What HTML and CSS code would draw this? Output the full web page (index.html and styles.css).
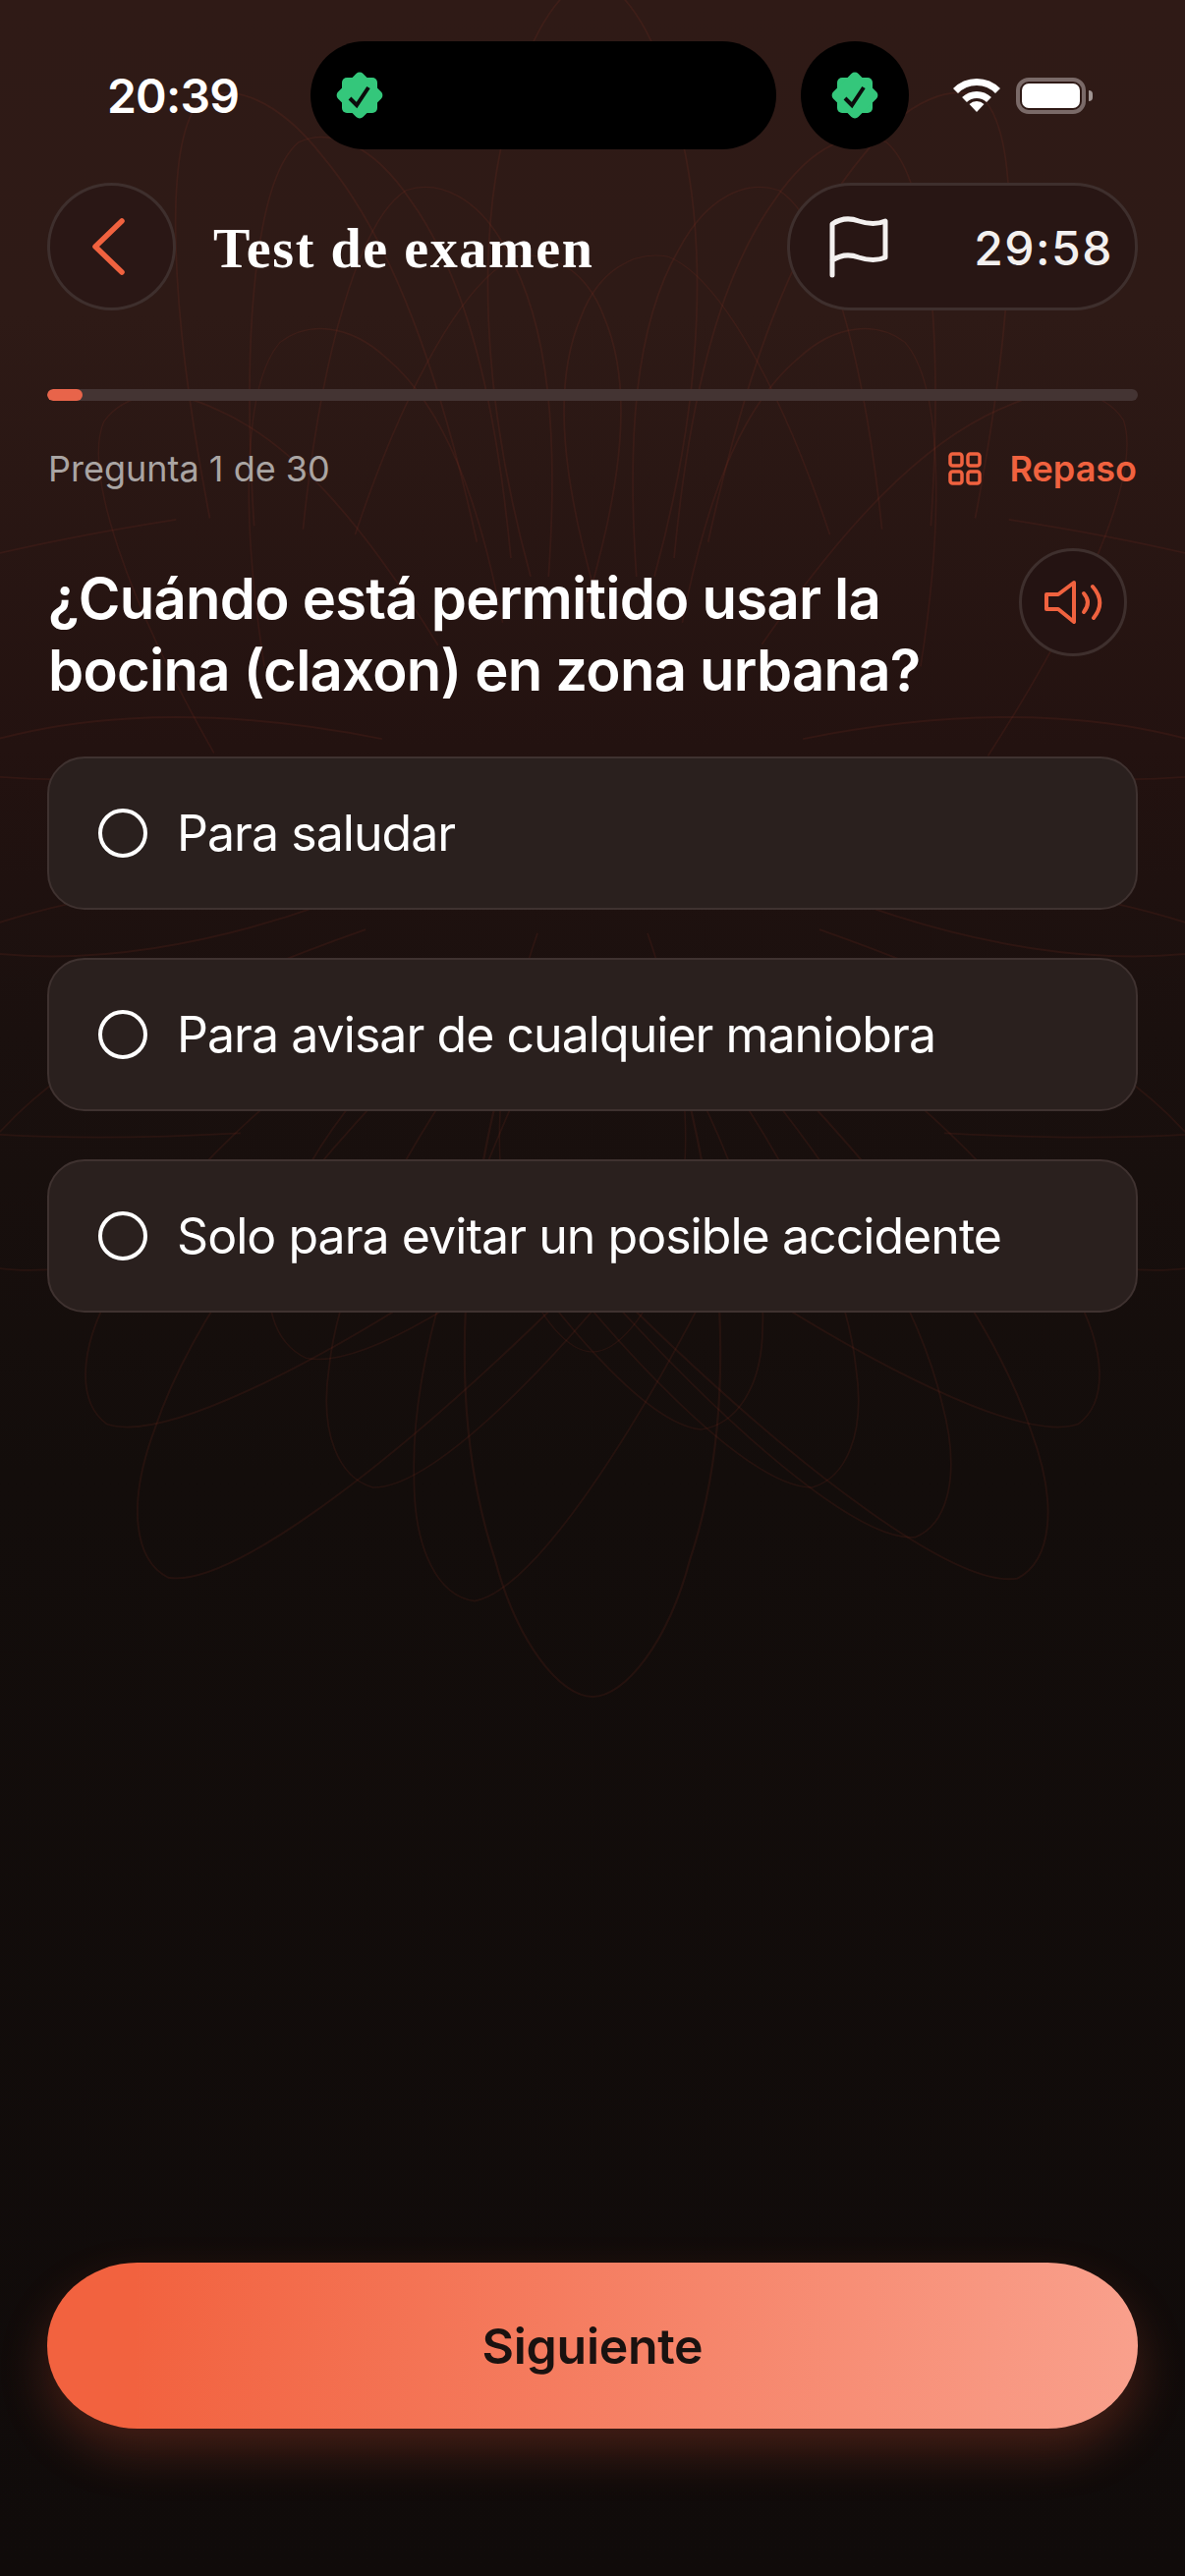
FILE: index.html
```html
<!DOCTYPE html>
<html lang="es">

<head>
    <meta charset="UTF-8">
    <meta name="viewport" content="width=device-width, initial-scale=1.0">
    <title>Test de examen</title>
    <link rel="stylesheet" href="styles.css">
</head>

<body>
    <div class="screen">
        <svg class="flower" viewBox="0 0 1206 2622" aria-hidden="true">
            <defs>
                <path id="petal" d="M-70 260 C-125 480 -135 690 -90 850 C-70 940 -30 1000 0 1000 C30 1000 70 940 90 850 C135 690 125 480 70 260"/>
                <path id="petal-l" d="M-30 340 C-90 540 -125 720 -105 860 C-95 950 -60 1000 -20 1000 C40 980 130 800 215 540"/>
                <path id="petal-r" d="M30 340 C90 540 125 720 105 860 C95 950 60 1000 20 1000 C-40 980 -130 800 -215 540"/>
            </defs>
            <g transform="translate(603 800)">
                <!-- lower half -->
                <use href="#petal" transform="scale(1.1 .927)"/>
                <use href="#petal" transform="scale(.8 .576)"/>
                <use href="#petal-l" transform="rotate(7) scale(.9 .838)"/>
                <use href="#petal-r" transform="rotate(-8) scale(.9 .664)"/>
                <use href="#petal-l" transform="rotate(16) scale(.9 .748)"/>
                <use href="#petal-r" transform="rotate(-16) scale(.9 .748)"/>
                <use href="#petal-l" transform="rotate(25) scale(.9 .651)"/>
                <use href="#petal-r" transform="rotate(-22) scale(.9 .832)"/>
                <use href="#petal-l" transform="rotate(27) scale(.95 .914)"/>
                <use href="#petal-r" transform="rotate(-27) scale(.95 .915)"/>
                <use href="#petal-l" transform="rotate(36) scale(.9 .816)"/>
                <use href="#petal-r" transform="rotate(-36) scale(.9 .816)"/>
                <!-- sides -->
                <use href="#petal-l" transform="rotate(52) scale(.9 .8)"/>
                <use href="#petal-r" transform="rotate(-52) scale(.9 .8)"/>
                <use href="#petal-l" transform="rotate(68) scale(.9 .86)"/>
                <use href="#petal-r" transform="rotate(-68) scale(.9 .86)"/>
                <use href="#petal" transform="rotate(84) scale(1 .8)"/>
                <use href="#petal" transform="rotate(-84) scale(1 .8)"/>
                <use href="#petal-r" transform="rotate(100) scale(.9 .86)"/>
                <use href="#petal-l" transform="rotate(-100) scale(.9 .86)"/>
                <!-- upper half -->
                <use href="#petal-l" transform="rotate(125) scale(.9 .62)"/>
                <use href="#petal-r" transform="rotate(-123) scale(.9 .656)"/>
                <use href="#petal-l" transform="rotate(143) scale(.9 .552)"/>
                <use href="#petal-r" transform="rotate(-143) scale(.9 .552)"/>
                <use href="#petal-l" transform="rotate(149) scale(.9 .804)"/>
                <use href="#petal-r" transform="rotate(-149) scale(.9 .804)"/>
                <use href="#petal-l" transform="rotate(154) scale(.9 .72)"/>
                <use href="#petal-r" transform="rotate(-154) scale(.9 .72)"/>
                <use href="#petal-l" transform="rotate(161) scale(.9 .635)"/>
                <use href="#petal-r" transform="rotate(-161) scale(.9 .635)"/>
                <use href="#petal-l" transform="rotate(170) scale(.9 .544)"/>
                <use href="#petal-r" transform="rotate(-170) scale(.9 .544)"/>
                <use href="#petal" transform="rotate(180) scale(.9 .82)"/>
            </g>
        </svg>

        <div class="status-bar">
            <span class="clock">20:39</span>
            <div class="island">
                <svg class="badge" viewBox="0 0 48 48">
                    <rect x="6" y="6" width="36" height="36" rx="5"/>
                    <rect x="6" y="6" width="36" height="36" rx="5" transform="rotate(45 24 24)"/>
                    <path d="M14 27 L21 34 L33 16"/>
                </svg>
            </div>
            <div class="island-dot">
                <svg class="badge" viewBox="0 0 48 48">
                    <rect x="6" y="6" width="36" height="36" rx="5"/>
                    <rect x="6" y="6" width="36" height="36" rx="5" transform="rotate(45 24 24)"/>
                    <path d="M14 27 L21 34 L33 16"/>
                </svg>
            </div>
            <svg class="wifi" viewBox="0 0 48 36">
                <path class="wifi-arc" d="M2.5 13.5 A30 30 0 0 1 45.500 13.5"/>
                <path class="wifi-arc" d="M11.500 22.500 A18 18 0 0 1 36.500 22.500"/>
                <path class="wifi-dot" d="M16.500 27 A11 11 0 0 1 31.500 27 L24 35 Z"/>
            </svg>
            <div class="battery">
                <div class="battery-level"></div>
            </div>
            <div class="battery-nub"></div>
        </div>

        <div class="header">
            <button class="back-btn">
                <svg viewBox="0 0 36 58">
                    <path d="M32 3 L5 29 L32 55"/>
                </svg>
            </button>
            <h1 class="title">Test de examen</h1>
            <div class="timer">
                <svg class="flag" viewBox="0 0 60 64">
                    <path d="M3 61 V9 C12 3 22 3 30 6 C39 9 48 10 57 6 V43 C48 47 39 46 30 43 C22 40 12 40 3 46"/>
                </svg>
                <span class="time">29:58</span>
            </div>
        </div>

        <div class="progress">
            <div class="progress-fill"></div>
        </div>

        <div class="meta">
            <span class="count">Pregunta 1 de 30</span>
            <div class="review">
                <svg class="grid-icon" viewBox="0 0 34 34">
                    <rect x="2" y="2" width="12" height="12" rx="2.500"/>
                    <rect x="20" y="2" width="12" height="12" rx="2.500"/>
                    <rect x="2" y="20" width="12" height="12" rx="2.500"/>
                    <rect x="20" y="20" width="12" height="12" rx="2.500"/>
                </svg>
                <span>Repaso</span>
            </div>
        </div>

        <div class="question">
            <h2>¿Cuándo está permitido usar la bocina (claxon) en zona urbana?</h2>
            <button class="sound-btn">
                <svg viewBox="25 30 60 50">
                    <path d="M28 47 V62 H40 L56 75 V35 L40 47 Z"/>
                    <path d="M66 46 Q74 55 66 65"/>
                    <path d="M75 39 Q89 55 76 71"/>
                </svg>
            </button>
        </div>

        <div class="options">
            <div class="option"><span class="radio"></span>Para saludar</div>
            <div class="option"><span class="radio"></span>Para avisar de cualquier maniobra</div>
            <div class="option"><span class="radio"></span>Solo para evitar un posible accidente</div>
        </div>

        <button class="next-btn">Siguiente</button>
    </div>
</body>

</html>
```
FILE: styles.css
```css
* {
    box-sizing: border-box;
}

body {
    margin: 0;
    background-color: #0f0a09;
    font-family: 'Inter', sans-serif;
    color: #fff;
}

button {
    font-family: inherit;
    padding: 0;
    cursor: pointer;
}

.screen {
    position: relative;
    display: flex;
    flex-direction: column;
    width: 1206px;
    height: 2622px;
    overflow: hidden;
    background: linear-gradient(180deg, #2f1a16 0, #2e1a16 320px, #231210 760px, #1a100e 1050px, #130d0b 1500px, #100b0a 2622px);
}

.flower {
    position: absolute;
    top: 0;
    left: 0;
    width: 1206px;
    height: 2622px;
    fill: none;
    stroke: #c8442e;
    stroke-width: 2;
    stroke-opacity: 0.1;
}

.flower use {
    vector-effect: non-scaling-stroke;
}

.status-bar,
.header,
.progress,
.meta,
.question,
.options,
.next-btn {
    position: relative;
}

/* Status bar */
.status-bar {
    display: flex;
    align-items: center;
    height: 110px;
    margin-top: 42px;
    padding-left: 109px;
}

.clock {
    width: 132px;
    font-size: 48px;
    font-weight: 600;
    letter-spacing: -0.8px;
    white-space: nowrap;
}

.island {
    display: flex;
    align-items: center;
    width: 474px;
    height: 110px;
    margin-left: 75px;
    padding-left: 26px;
    border-radius: 55px;
    background-color: #000;
}

.island-dot {
    display: flex;
    align-items: center;
    justify-content: center;
    width: 110px;
    height: 110px;
    margin-left: 25px;
    border-radius: 50%;
    background-color: #000;
}

.badge {
    width: 48px;
    height: 48px;
    fill: #34c77b;
}

.badge path {
    fill: none;
    stroke: #0b0b0b;
    stroke-width: 4;
}

.wifi {
    width: 48px;
    height: 36px;
    margin-left: 45px;
}

.wifi-arc {
    fill: none;
    stroke: #fff;
    stroke-width: 7;
}

.wifi-dot {
    fill: #fff;
}

.battery {
    width: 71px;
    height: 37px;
    margin-left: 16px;
    padding: 2px;
    border: 4px solid #7a6a68;
    border-radius: 13px;
}

.battery-level {
    height: 100%;
    border-radius: 7px;
    background-color: #fff;
}

.battery-nub {
    width: 4px;
    height: 11px;
    margin-left: 3px;
    border-radius: 0 4px 4px 0;
    background-color: #a09593;
}

/* Header */
.header {
    display: flex;
    align-items: center;
    height: 130px;
    margin-top: 34px;
    padding: 0 48px;
}

.back-btn {
    display: flex;
    align-items: center;
    justify-content: center;
    flex-shrink: 0;
    width: 131px;
    height: 130px;
    border: 3px solid #3e2f2d;
    border-radius: 50%;
    background-color: #2a1715;
}

.back-btn svg {
    width: 36px;
    height: 58px;
    margin-right: 8px;
    fill: none;
    stroke: #f0623f;
    stroke-width: 5.5;
    stroke-linecap: round;
    stroke-linejoin: round;
}

.title {
    margin: 4px 0 0 38px;
    font-family: 'Liberation Serif', serif;
    font-size: 56px;
    font-weight: 700;
    letter-spacing: 1.6px;
    white-space: nowrap;
}

.timer {
    display: flex;
    align-items: center;
    justify-content: space-between;
    width: 357px;
    height: 130px;
    margin-left: auto;
    padding: 0 22px 0 40px;
    border: 3px solid #3e2f2d;
    border-radius: 65px;
    background-color: #281614;
}

.flag {
    width: 60px;
    height: 64px;
    fill: none;
    stroke: #f3f0ef;
    stroke-width: 5;
    stroke-linecap: round;
    stroke-linejoin: round;
}

.time {
    margin-top: 2px;
    font-size: 48px;
    font-weight: 500;
    color: #f3f0ef;
    letter-spacing: 1.5px;
}

/* Progress */
.progress {
    height: 12px;
    margin: 80px 48px 0;
    border-radius: 6px;
    background-color: #443433;
    overflow: hidden;
}

.progress-fill {
    width: 36px;
    height: 100%;
    border-radius: 6px;
    background-color: #e8644a;
}

.meta {
    display: flex;
    align-items: center;
    justify-content: space-between;
    height: 38px;
    margin: 50px 49px 0;
    font-size: 36px;
}

.count {
    color: #aaa5a3;
}

.review {
    display: flex;
    align-items: center;
    gap: 29px;
    font-weight: 600;
    color: #f0623f;
}

.grid-icon {
    width: 34px;
    height: 34px;
    fill: none;
    stroke: #f0623f;
    stroke-width: 3.5;
}

/* Question */
.question {
    display: flex;
    justify-content: space-between;
    height: 164px;
    margin: 62px 59px 0 49px;
}

.question h2 {
    width: 950px;
    margin: 15px 0 0;
    font-size: 58px;
    font-weight: 600;
    letter-spacing: -0.75px;
    line-height: 73px;
}

.sound-btn {
    display: flex;
    align-items: center;
    justify-content: center;
    flex-shrink: 0;
    width: 110px;
    height: 110px;
    border: 3px solid #3e2f2d;
    border-radius: 50%;
    background-color: #241312;
}

.sound-btn svg {
    width: 60px;
    height: 50px;
    fill: none;
    stroke: #f0623f;
    stroke-width: 4;
    stroke-linecap: round;
    stroke-linejoin: round;
}

/* Options */
.options {
    display: flex;
    flex-direction: column;
    gap: 49px;
    margin: 48px 48px 0;
}

.option {
    display: flex;
    align-items: center;
    gap: 30px;
    height: 156px;
    padding-left: 50px;
    border: 2px solid #3f3230;
    border-radius: 38px;
    background-color: #2a201e;
    font-size: 50px;
    letter-spacing: -0.95px;
}

.radio {
    width: 50px;
    height: 50px;
    border: 4px solid #fff;
    border-radius: 50%;
}

/* Bottom button */
.next-btn {
    height: 169px;
    margin: auto 48px 150px;
    border: none;
    border-radius: 92px / 84px;
    background: linear-gradient(90deg, #f2623f 8%, #f9a08c 100%);
    box-shadow: 0 24px 50px rgba(240, 90, 60, 0.24);
    color: #1a1210;
    font-size: 50px;
    font-weight: 600;
    letter-spacing: -0.3px;
}
```
